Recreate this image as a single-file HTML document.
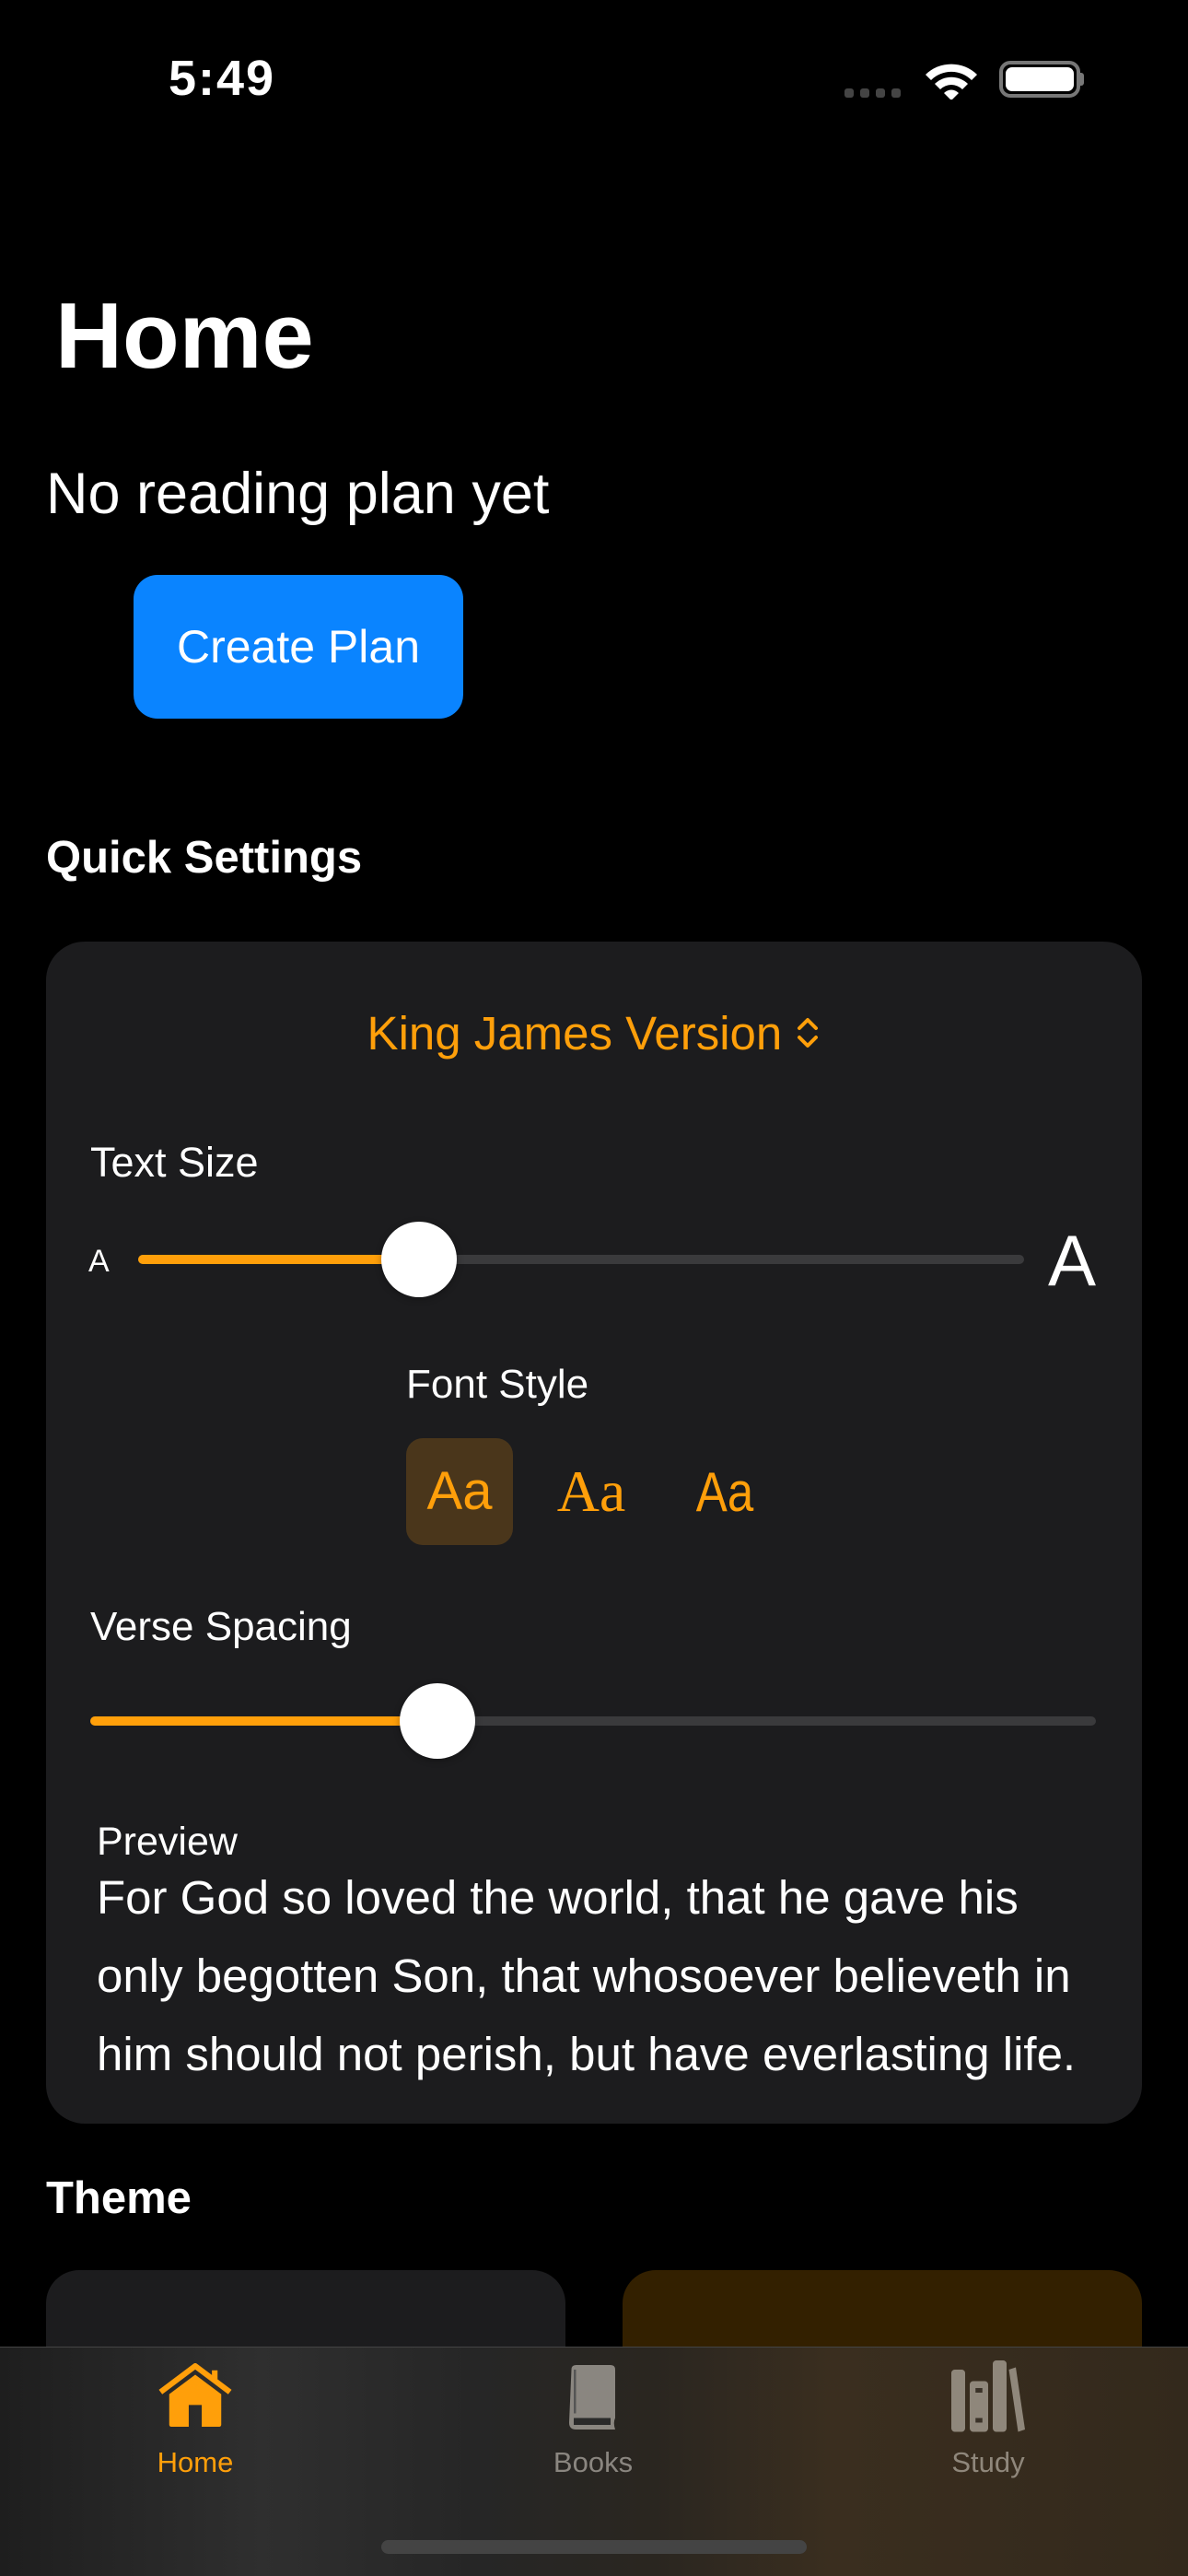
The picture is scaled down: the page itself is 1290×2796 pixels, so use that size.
<!DOCTYPE html>
<html><head><meta charset="utf-8">
<style>
*{margin:0;padding:0;box-sizing:border-box}
html,body{width:1290px;height:2796px;background:#000;overflow:hidden}
body{position:relative;font-family:"Liberation Sans",sans-serif;color:#fff}
.a{position:absolute;white-space:nowrap}
.or{color:#FF9F0A}
</style></head><body>
<div class="a" style="left:183px;top:54px;font-size:54px;font-weight:bold;letter-spacing:2px">5:49</div>
<div class="a" style="left:917px;top:96px;width:10px;height:10px;border-radius:3px;background:#444"></div>
<div class="a" style="left:934px;top:96px;width:10px;height:10px;border-radius:3px;background:#444"></div>
<div class="a" style="left:951px;top:96px;width:10px;height:10px;border-radius:3px;background:#444"></div>
<div class="a" style="left:968px;top:96px;width:10px;height:10px;border-radius:3px;background:#444"></div>
<svg class="a" style="left:1003px;top:64px" width="60" height="44" viewBox="0 0 60 44">
<path d="M2 17 A40 40 0 0 1 58 17 L52 23 A31 31 0 0 0 8 23Z" fill="#fff"/>
<path d="M12 27 A26 26 0 0 1 48 27 L42 33 A17 17 0 0 0 18 33Z" fill="#fff"/>
<path d="M22 37 A11 11 0 0 1 38 37 L30 45Z" fill="#fff"/>
</svg>
<div class="a" style="left:1085px;top:66px;width:88px;height:40px;border:4px solid #777;border-radius:12px;padding:3px"><div style="width:100%;height:100%;background:#fff;border-radius:7px"></div></div>
<div class="a" style="left:1172px;top:79px;width:5px;height:14px;background:#777;border-radius:0 3px 3px 0"></div>

<div class="a" style="left:60px;top:308px;font-size:101px;font-weight:bold">Home</div>
<div class="a" style="left:50px;top:500px;font-size:63px">No reading plan yet</div>
<div class="a" style="left:145px;top:624px;width:358px;height:156px;background:#0A84FF;border-radius:26px;font-size:50px;line-height:156px;text-align:center">Create Plan</div>
<div class="a" style="left:50px;top:903px;font-size:49px;font-weight:bold">Quick Settings</div>

<div class="a" style="left:50px;top:1022px;width:1190px;height:1283px;background:#1C1C1E;border-radius:42px"></div>
<div class="a or" style="left:0;width:1290px;top:1092px;text-align:center;font-size:51px">King James Version <svg width="28" height="44" viewBox="0 0 28 44" style="vertical-align:-4px"><path d="M5 17 L14 8 L23 17 M5 27 L14 36 L23 27" stroke="#FF9F0A" stroke-width="4" fill="none" stroke-linecap="round" stroke-linejoin="round"/></svg></div>
<div class="a" style="left:98px;top:1236px;font-size:45px">Text Size</div>
<div class="a" style="left:96px;top:1350px;font-size:34px">A</div>
<div class="a" style="left:150px;top:1362px;width:962px;height:10px;border-radius:5px;background:#3A3A3C"></div>
<div class="a" style="left:150px;top:1362px;width:305px;height:10px;border-radius:5px;background:#FF9F0A"></div>
<div class="a" style="left:414px;top:1326px;width:82px;height:82px;border-radius:50%;background:#fff;box-shadow:0 2px 8px rgba(0,0,0,.3)"></div>
<div class="a" style="left:1138px;top:1323px;font-size:78px">A</div>
<div class="a" style="left:441px;top:1478px;font-size:44px">Font Style</div>
<div class="a" style="left:441px;top:1561px;width:116px;height:116px;border-radius:18px;background:#4A361B"></div>
<div class="a or" style="left:441px;width:116px;text-align:center;top:1585px;font-size:58px">Aa</div>
<div class="a or" style="left:584px;width:116px;text-align:center;top:1582px;font-size:64px;font-family:'Liberation Serif',serif">Aa</div>
<div class="a or" style="left:729px;width:116px;text-align:center;top:1585px;font-size:60px;transform:scaleX(.85)">Aa</div>
<div class="a" style="left:98px;top:1741px;font-size:44px">Verse Spacing</div>
<div class="a" style="left:98px;top:1863px;width:1092px;height:10px;border-radius:5px;background:#3A3A3C"></div>
<div class="a" style="left:98px;top:1863px;width:377px;height:10px;border-radius:5px;background:#FF9F0A"></div>
<div class="a" style="left:434px;top:1827px;width:82px;height:82px;border-radius:50%;background:#fff;box-shadow:0 2px 8px rgba(0,0,0,.3)"></div>
<div class="a" style="left:105px;top:1975px;font-size:43px">Preview</div>
<div class="a" style="left:105px;top:2017px;font-size:51px;line-height:85px">For God so loved the world, that he gave his<br>only begotten Son, that whosoever believeth in<br>him should not perish, but have everlasting life.</div>

<div class="a" style="left:50px;top:2358px;font-size:49px;font-weight:bold">Theme</div>
<div class="a" style="left:50px;top:2464px;width:564px;height:200px;border-radius:36px;background:#1C1C1E"></div>
<div class="a" style="left:676px;top:2464px;width:564px;height:200px;border-radius:36px;background:#332000"></div>

<div class="a" style="left:0;top:2547px;width:1290px;height:249px;background:linear-gradient(90deg,#1e1e1e 0%,#2f2f2f 22%,#262626 40%,#2a2620 55%,#3a2e1f 70%,#33291c 100%);border-top:1px solid #444"></div>
<svg class="a" style="left:172px;top:2565px" width="80" height="72" viewBox="0 0 34 30">
<path d="M1 13 L17 1 L33 13" stroke="#FF9F0A" stroke-width="2.6" fill="none" stroke-linejoin="round"/>
<path d="M26 7 V3" stroke="#FF9F0A" stroke-width="2.6"/>
<path d="M5 14 L17 5 L29 14 V28 Q29 29 28 29 H6 Q5 29 5 28Z M14 19 V29 H20 V19Z" fill="#FF9F0A" fill-rule="evenodd"/>
</svg>
<div class="a or" style="left:112px;width:200px;text-align:center;top:2655px;font-size:31px">Home</div>
<svg class="a" style="left:613px;top:2564px" width="60" height="76" viewBox="0 0 24 30">
<path d="M3 3 Q3 1 5 1 H20 Q22 1 22 3 V24 Q21 26 22 29 H5 Q2 29 2 26 Z" fill="#8a8680"/>
<path d="M4.5 3 V22" stroke="#555" stroke-width="1"/>
<path d="M4 24 H20 V27 H4Z" fill="#2a2a2a"/>
</svg>
<div class="a" style="left:544px;width:200px;text-align:center;top:2655px;font-size:31px;color:#8a8680">Books</div>
<svg class="a" style="left:1030px;top:2562px" width="86" height="80" viewBox="0 0 34 32">
<rect x="1" y="4" width="6" height="27" rx="1.5" fill="#8f877b"/>
<rect x="9" y="9" width="8" height="22" rx="1.5" fill="#8f877b"/>
<rect x="19" y="0" width="6" height="31" rx="1.5" fill="#8f877b"/>
<path d="M26 4 L29 3 L33 30 L30 31Z" fill="#8f877b"/>
<rect x="11.5" y="12" width="3" height="2" fill="#3a3228"/>
<rect x="11.5" y="25" width="3" height="2" fill="#3a3228"/>
</svg>
<div class="a" style="left:973px;width:200px;text-align:center;top:2655px;font-size:31px;color:#8f877b">Study</div>
<div class="a" style="left:414px;top:2757px;width:462px;height:15px;border-radius:8px;background:#444"></div>
</body></html>
